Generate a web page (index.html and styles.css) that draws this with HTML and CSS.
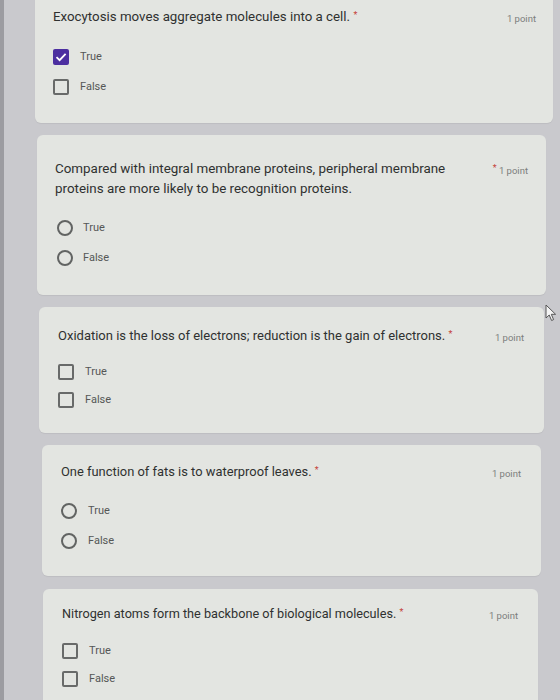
FILE: index.html
```html
<!DOCTYPE html>
<html>
<head>
<meta charset="utf-8">
<link rel="stylesheet" href="styles.css">
</head>
<body>
<div class="bezel"></div>
<div class="form">
  <div class="card c1">
    <div class="head">
      <div class="title">Exocytosis moves aggregate molecules into a cell. <span class="req">*</span></div>
      <div class="points">1 point</div>
    </div>
    <div class="options">
      <div class="opt"><span class="box checked"><svg viewBox="0 0 16 16" width="16" height="16"><path d="M3.5 8.2 L6.6 11.2 L12.6 4.8" fill="none" stroke="#fff" stroke-width="1.8"/></svg></span><span class="lab">True</span></div>
      <div class="opt"><span class="box"></span><span class="lab">False</span></div>
    </div>
  </div>

  <div class="card c2">
    <div class="head">
      <div class="title wrap">Compared with integral membrane proteins, peripheral membrane proteins are more likely to be recognition proteins.</div>
      <div class="points"><span class="req">*</span> 1 point</div>
    </div>
    <div class="options">
      <div class="opt"><span class="radio"></span><span class="lab">True</span></div>
      <div class="opt"><span class="radio"></span><span class="lab">False</span></div>
    </div>
  </div>

  <div class="card c3">
    <div class="head">
      <div class="title">Oxidation is the loss of electrons; reduction is the gain of electrons. <span class="req">*</span></div>
      <div class="points">1 point</div>
    </div>
    <div class="options tight">
      <div class="opt"><span class="box"></span><span class="lab">True</span></div>
      <div class="opt"><span class="box"></span><span class="lab">False</span></div>
    </div>
  </div>

  <div class="card c4">
    <div class="head">
      <div class="title">One function of fats is to waterproof leaves. <span class="req">*</span></div>
      <div class="points">1 point</div>
    </div>
    <div class="options">
      <div class="opt"><span class="radio"></span><span class="lab">True</span></div>
      <div class="opt"><span class="radio"></span><span class="lab">False</span></div>
    </div>
  </div>

  <div class="card c5">
    <div class="head">
      <div class="title">Nitrogen atoms form the backbone of biological molecules. <span class="req">*</span></div>
      <div class="points">1 point</div>
    </div>
    <div class="options tight">
      <div class="opt"><span class="box"></span><span class="lab">True</span></div>
      <div class="opt"><span class="box"></span><span class="lab">False</span></div>
    </div>
  </div>
</div>
<svg class="cursor" viewBox="0 0 12 18" width="12" height="18"><path d="M1 1 L1 14 L4.2 11 L6.6 16.5 L8.6 15.6 L6.3 10.3 L10.6 10.3 Z" fill="#f4f4f4" stroke="#555" stroke-width="1"/></svg>
</body>
</html>
```

FILE: styles.css
```css
html, body {
  margin: 0;
  padding: 0;
}
body {
  width: 560px;
  height: 700px;
  overflow: hidden;
  background: #c9c9cd;
  font-family: Roboto, "Noto Sans", Arial, sans-serif;
  position: relative;
  display: flex;
}
.bezel {
  width: 4px;
  flex: none;
  background: #9c9ca1;
}
.form {
  flex: 1;
  display: flex;
  flex-direction: column;
  gap: 12px;
}
.card {
  background: #e3e5e1;
  border-radius: 6px;
  padding: 20px 20px 20px 18px;
  box-shadow: 0 1px 1px rgba(0,0,0,0.06);
}
.head {
  display: flex;
  justify-content: space-between;
  align-items: flex-start;
  height: 20px;
}
.title {
  font-size: 12.8px;
  line-height: 20px;
  height: 20px;
  color: #2f3130;
}
.title.wrap {
  width: 410px;
  height: 40px;
  font-size: 13.4px;
}
.req {
  color: #c5423a;
  font-size: 9px;
  line-height: 0;
  vertical-align: 3px;
}
.points {
  font-size: 9.5px;
  color: #7c7e7c;
  line-height: 24px;
  height: 20px;
  white-space: nowrap;
}
.options {
  margin-top: 14px;
}
.opt {
  height: 30px;
  display: flex;
  align-items: center;
  gap: 11px;
}
.options.tight .opt {
  height: 28px;
}
.lab {
  font-size: 11px;
  line-height: 14px;
  color: #555756;
}
.box {
  width: 12px;
  height: 12px;
  border: 2px solid #686a69;
  border-radius: 2px;
  flex: none;
  display: flex;
  align-items: center;
  justify-content: center;
}
.box.checked {
  width: 16px;
  height: 16px;
  border: none;
  background: #4c2fa0;
}
.radio {
  width: 12px;
  height: 12px;
  border: 2px solid #626463;
  border-radius: 50%;
  flex: none;
}
/* photo keystone: cards shift inward as they go down */
.c1 { margin: -13px 7px 0 31px; padding-right: 17px; padding-bottom: 21px; }
.c1 .title { font-size: 13.3px; }
.c1 .options { margin-top: 15px; }
.c2 { margin: 0 14px 0 33px; padding-top: 24px; padding-bottom: 22px; padding-right: 18px; }
.c2 .head { height: 40px; }
.c2 .opt { gap: 10px; }
.c2 .radio { margin-left: 2px; }
.c3 { margin: 0 16px 0 35px; padding-top: 19px; padding-bottom: 19px; padding-left: 19px; }
.c3 .title { font-size: 13px; }
.c3 .options { margin-top: 12px; }
.c4 { margin: 0 19px 0 38px; padding-top: 17px; padding-bottom: 20px; padding-left: 19px; }
.c4 .title { font-size: 12.9px; }
.c5 { margin: 1px 22px 0 39px; padding-top: 15px; padding-left: 19px; }
.c5 .title { font-size: 12.7px; }
.c5 .options { margin-top: 13px; }
.cursor {
  position: absolute;
  left: 545px;
  top: 304px;
}
```
